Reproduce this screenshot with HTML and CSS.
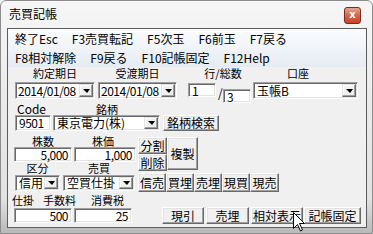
FILE: index.html
```html
<!DOCTYPE html>
<html lang="ja">
<head>
  <meta charset="UTF-8">
  <title>売買記帳</title>
  <link rel="stylesheet" href="styles.css">
</head>
<body>
  <div class="window">
    <div class="titlebar">
      <span class="title">売買記帳</span>
      <span class="close">x</span>
    </div>
    <div class="client">
      <!-- menu -->
      <div class="menubar">
        <div class="menurow">
          <span>終了Esc</span><span>F3売買転記</span><span>F5次玉</span><span>F6前玉</span><span>F7戻る</span>
        </div>
        <div class="menurow">
          <span>F8相対解除</span><span>F9戻る</span><span>F10記帳固定</span><span>F12Help</span>
        </div>
      </div>

      <div class="form">
        <div class="row lab1">
          <span class="lab w-date1">約定期日</span>
          <span class="lab w-date2">受渡期日</span>
          <span class="lab w-line">行/総数</span>
          <span class="lab w-acct">口座</span>
        </div>
        <div class="row ctl1">
          <div class="combo date1"><span class="val digits">2014/01/08</span><span class="dd"></span></div>
          <div class="combo date2"><span class="val digits">2014/01/08</span><span class="dd"></span></div>
          <div class="edit line">1</div>
          <span class="slash">/</span>
          <div class="edit total">3</div>
          <div class="combo acct"><span class="val">玉帳B</span><span class="dd"></span></div>
        </div>
        <div class="row lab2">
          <span class="lab code-lab">Code</span>
          <span class="lab name-lab">銘柄</span>
        </div>
        <div class="row ctl2">
          <div class="edit code digits">9501</div>
          <div class="combo name"><span class="val">東京電力(株)</span><span class="dd"></span></div>
          <div class="btn search">銘柄検索</div>
        </div>

        <div class="row block">
          <div class="leftcol">
            <div class="row lab3">
              <span class="lab w-qty">株数</span>
              <span class="lab w-price">株価</span>
            </div>
            <div class="row ctl3">
              <div class="edit num digits qty">5,000</div>
              <div class="edit num digits price">1,000</div>
            </div>
            <div class="row lab4">
              <span class="lab w-kind">区分</span>
              <span class="lab w-side">売買</span>
            </div>
          </div>
          <div class="stack">
            <div class="btn small">分割</div>
            <div class="btn small">削除</div>
          </div>
          <div class="btn copy">複製</div>
        </div>

        <div class="row ctl4">
          <div class="combo kind"><span class="val">信用</span><span class="dd"></span></div>
          <div class="combo side"><span class="val">空買仕掛</span><span class="dd"></span></div>
          <div class="btngroup">
            <div class="btn trade">信売</div>
            <div class="btn trade">買埋</div>
            <div class="btn trade">売埋</div>
            <div class="btn trade">現買</div>
            <div class="btn trade last">現売</div>
          </div>
        </div>
        <div class="row lab5">
          <span class="lab">仕掛</span>
          <span class="lab fee-lab">手数料</span>
          <span class="lab tax-lab">消費税</span>
        </div>
        <div class="row ctl5">
          <div class="edit num digits fee">500</div>
          <div class="edit num digits tax">25</div>
          <div class="btn act genbiki">現引</div>
          <div class="btn act urume">売埋</div>
          <div class="btn act rel">相対表示</div>
          <div class="btn act fix">記帳固定</div>
        </div>
      </div>
    </div>
    <svg class="cursor" width="13" height="20" viewBox="0 0 13 20">
      <path d="M0.5 0.5 L0.5 16.5 L4.5 12.5 L7.5 19 L9.5 18 L6.5 11.5 L11.5 11.5 Z" fill="#fff" stroke="#000" stroke-width="1"/>
    </svg>
  </div>
</body>
</html>
```

FILE: styles.css
```css
* { box-sizing: border-box; }
body {
  margin: 0;
  font-family: "Noto Sans CJK JP", sans-serif;
  font-size: 12px;
  color: #000;
}
.window {
  position: relative;
  width: 373px;
  height: 234px;
  padding: 0 5px 5px 6px;
  background: linear-gradient(#f6f6f6, #ebebeb 40%, #e2e2e2 85%, #b9b9b9);
  border: 1px solid #8c8c8c;
  border-radius: 6px 6px 0 0;
  display: flex;
  flex-direction: column;
}
.titlebar {
  height: 27px;
  display: flex;
  justify-content: space-between;
  align-items: flex-start;
}
.title {
  padding: 6px 0 0 2px;
  line-height: 14px;
}
.close {
  margin: 6px 6px 0 0;
  width: 17px;
  height: 17px;
  border: 1px solid #7a2a1e;
  border-radius: 3px;
  background: linear-gradient(#e8a593, #d3664c 50%, #c44529);
  color: #fff;
  font-family: "DejaVu Sans", sans-serif;
  font-weight: bold;
  font-size: 10px;
  line-height: 14px;
  text-align: center;
}
.client {
  flex: 1;
  border: 1px solid #5c5c5c;
  background: #f0f0f0;
  display: flex;
  flex-direction: column;
}

/* menu */
.menubar {
  height: 38px;
  background: linear-gradient(#fbfcfe, #e6ebf3);
}
.menurow {
  display: flex;
  gap: 14px;
  height: 19px;
  line-height: 19px;
  padding-left: 7px;
}

/* form */
.form { flex: 1; }
.row { display: flex; align-items: flex-start; }
.lab {
  font-size: 11px;
  line-height: 12px;
  text-align: center;
  white-space: nowrap;
}
.lab1 { height: 13px; }
.w-date1 { width: 80px; margin-left: 7px; }
.w-date2 { width: 79px; margin-left: 3px; }
.w-line { width: 70px; margin-left: 11px; }
.w-acct { width: 80px; }

.digits { letter-spacing: -0.5px; }

.edit, .combo {
  border: 1px solid;
  border-color: #a0a0a0 #fff #fff #a0a0a0;
  box-shadow: inset 1px 1px 0 #696969, inset -1px -1px 0 #e3e3e3;
  background: #fff;
  white-space: nowrap;
}
.edit {
  padding: 0 3px;
  line-height: 13px;
}
.edit.num { text-align: right; }
.combo {
  display: flex;
  height: 17px;
}
.combo .val {
  flex: 1;
  padding-left: 3px;
  line-height: 15px;
}
.dd {
  flex: none;
  width: 14px;
  height: 13px;
  margin: 1px 1px 0 0;
  background: #f0f0f0;
  border: 1px solid;
  border-color: #e3e3e3 #696969 #696969 #e3e3e3;
  box-shadow: inset -1px -1px 0 #a0a0a0, inset 1px 1px 0 #fff;
  display: flex;
  align-items: center;
  justify-content: center;
}
.dd::after {
  content: "";
  border-left: 4px solid transparent;
  border-right: 3px solid transparent;
  border-top: 4px solid #000;
}

.btn {
  background: #f0f0f0;
  border: 1px solid;
  border-color: #fff #696969 #696969 #fff;
  box-shadow: inset -1px -1px 0 #a0a0a0, inset 1px 1px 0 #e3e3e3;
  text-align: center;
  white-space: nowrap;
}

.ctl1 { height: 24px; }
.date1 { width: 80px; margin: 2px 0 0 7px; }
.date2 { width: 79px; margin: 2px 0 0 3px; }
.date1 .val, .date2 .val { padding-left: 2px; }
.edit.line { width: 28px; height: 14px; margin: 3px 0 0 11px; }
.slash { width: 5px; margin: 6px 0 0 2px; line-height: 14px; }
.edit.total { width: 28px; height: 14px; margin-top: 9px; }
.acct { width: 105px; margin: 2px 0 0 2px; }

.lab2 { height: 11px; }
.code-lab { margin-left: 9px; font-size: 12px; line-height: 10px; }
.name-lab { margin-left: 50px; line-height: 10px; }

.ctl2 { height: 18px; }
.edit.code { width: 36px; height: 16px; margin-left: 7px; }
.name { width: 107px; height: 16px; margin-left: 2px; }
.name .val { line-height: 14px; }
.name .dd { height: 12px; }
.btn.search { width: 56px; height: 16px; margin-left: 3px; line-height: 14px; }

.block { height: 40px; }
.leftcol { width: 130px; }
.lab3 { height: 14px; padding-top: 2px; }
.w-qty { width: 58px; margin-left: 6px; }
.w-price { width: 58px; margin-left: 2px; }
.ctl3 { height: 15px; }
.edit.qty { width: 58px; height: 15px; margin-left: 6px; }
.edit.price { width: 62px; height: 15px; margin-left: 2px; }
.lab4 { height: 11px; }
.w-kind { width: 45px; margin-left: 7px; }
.w-side { width: 72px; margin-left: 3px; }
.stack { margin-top: 4px; }
.btn.small { width: 29px; height: 17px; line-height: 15px; }
.btn.copy { width: 31px; height: 33px; margin-top: 4px; line-height: 31px; }

.ctl4 { height: 20px; }
.kind { width: 45px; height: 16px; margin: 2px 0 0 7px; }
.side { width: 72px; height: 16px; margin: 2px 0 0 3px; }
.kind .val, .side .val { line-height: 14px; }
.kind .dd, .side .dd { height: 12px; }
.btngroup { display: flex; margin-left: 3px; }
.btn.trade { width: 28px; height: 19px; line-height: 17px; }
.btn.trade.last { width: 29px; }

.lab5 { height: 14px; padding: 1px 0 0 4px; }
.fee-lab { margin-left: 9px; }
.tax-lab { margin-left: 15px; }

.ctl5 { height: 20px; }
.edit.fee { width: 58px; height: 15px; margin: 1px 0 0 6px; }
.edit.tax { width: 58px; height: 15px; margin: 1px 0 0 2px; }
.btn.act { height: 17px; line-height: 15px; }
.genbiki { width: 42px; margin-left: 30px; }
.urume { width: 43px; margin-left: 2px; }
.rel { width: 52px; margin-left: 2px; }
.fix { width: 57px; margin-left: 1px; }

.cursor {
  position: absolute;
  left: 292px;
  top: 211px;
}
```
